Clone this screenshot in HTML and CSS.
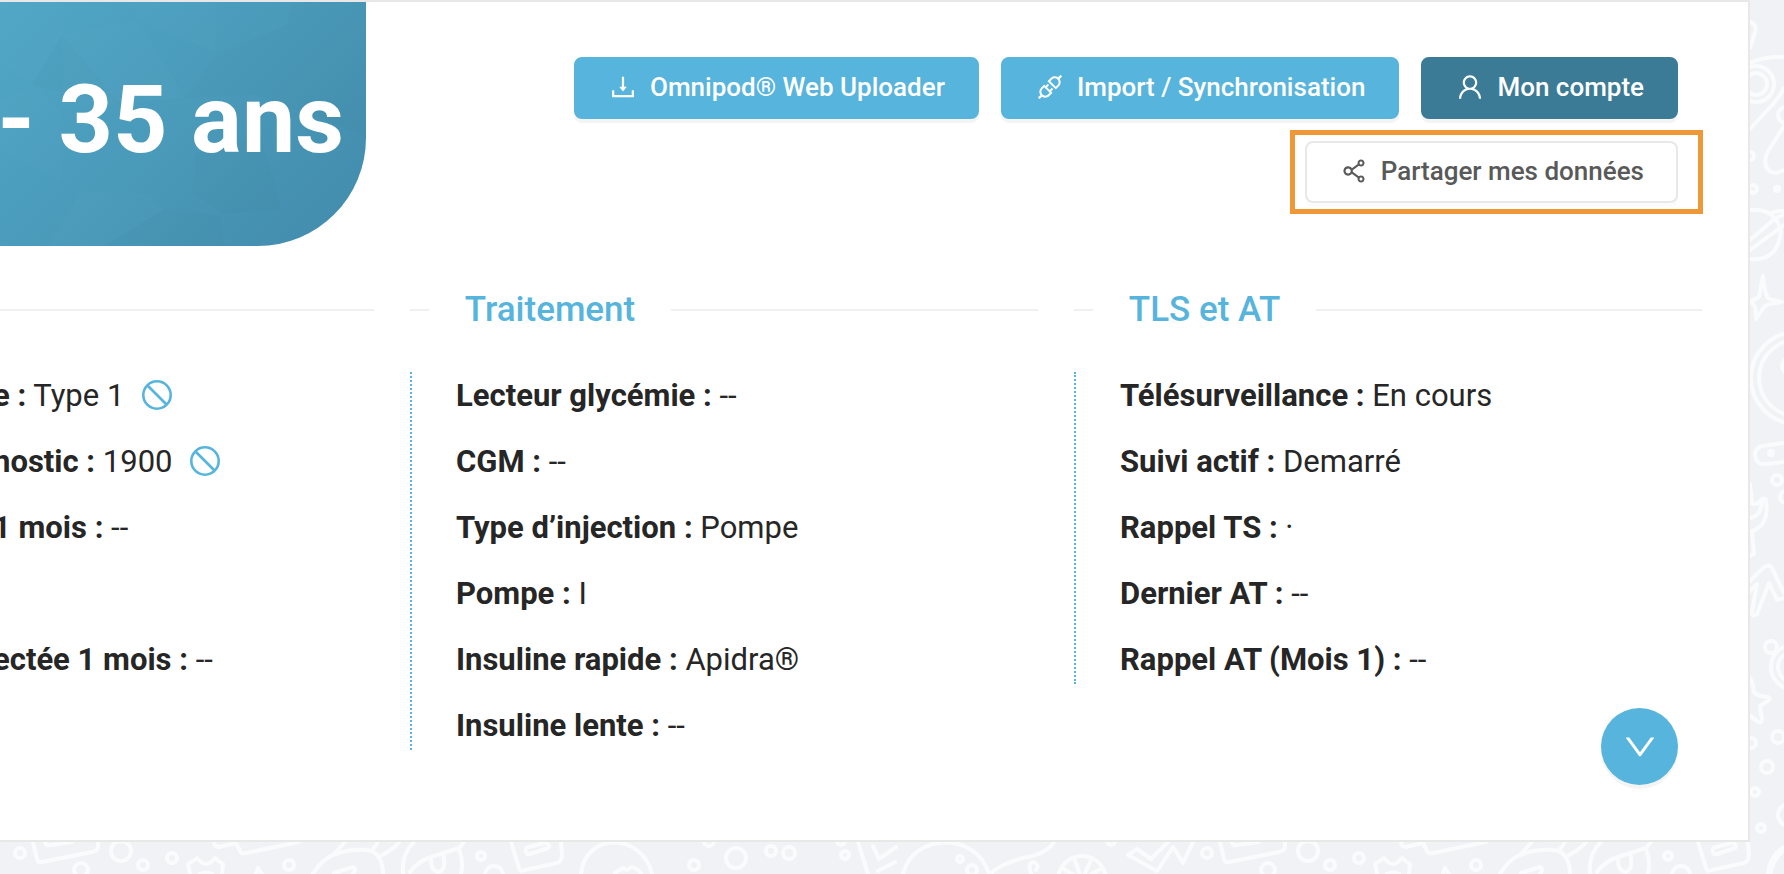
FILE: index.html
```html
<!DOCTYPE html>
<html lang="fr">
<head>
    <meta charset="UTF-8">
    <title>Dossier patient</title>
    <link rel="stylesheet" href="styles.css">
</head>
<body>
    <svg class="doodles" aria-hidden="true">
        <defs>
            <!-- bottom strip, repeats every 1187px -->
            <g id="doodle-row">
                <circle cx="20" cy="853" r="5"/>
                <path d="M33 842l4 17q1 4 5 3l50-10q6-1 6-6v-4M45 842q1 4 5 3l22-3"/>
                <circle cx="121" cy="851" r="10"/>
                <circle cx="81" cy="870" r="7"/>
                <circle cx="143" cy="865" r="5"/>
                <circle cx="172" cy="858" r="5"/>
                <path d="M214 842q0 5 5 5l17-4 4 8q1 3 6 2l53-11"/>
                <path d="M190 874l-2-10q5-3 9-6 5 6 9 6t9-6q4 4 8 6l-1 10M200 874q6-3 12 0"/>
                <path d="M256 874l2-6 4 6"/>
                <circle cx="289" cy="865" r="5"/>
                <path d="M313 874q8-14 20-19 20-8 39-4 11 6 11 23M333 855l12-13M372 851l6-9M382 855q12-6 17-13M334 873l19-6q4 2 0 7"/>
                <path d="M403 874q-2-20 11-32M410 872q8-11 21-15l28-9 5-6M459 849q5 12 2 25M431 857q-1 14 8 15 8-3 4-19"/>
                <circle cx="481" cy="856" r="4"/>
                <circle cx="494" cy="875" r="9"/>
                <path d="M511 842l8 26q1 4 6 2l32-7q5-2 5-8l-1-13M526 852q-2-4 3-5l16-4q6 1 3 5l-18 6q-3 1-4-2z"/>
                <path d="M581 874c4-42 61-42 71 0M615 873l8-5q4 4 8-1 7 1 10 7"/>
                <circle cx="709" cy="841" r="5"/>
                <circle cx="694" cy="865" r="5"/>
                <circle cx="736" cy="858" r="10"/>
                <circle cx="771" cy="851" r="5"/>
                <circle cx="789" cy="853" r="6"/>
                <circle cx="841" cy="841" r="4"/>
                <circle cx="845" cy="855" r="4"/>
                <path d="M858 842l10 32M873 846l6 13 17-12M878 871l17-9"/>
                <path d="M903 874c10-42 74-42 86 0M991 873q12-10 32-15 24-4 31-16M1031 874q-4-12 3-12 6 3 2 8"/>
                <circle cx="960" cy="859" r="3"/>
                <circle cx="972" cy="870" r="5"/>
                <circle cx="1082" cy="880" r="24"/>
                <path d="M1074 858l8 22 10-22M1062 868l20 12 20-12"/>
                <circle cx="1111" cy="841" r="4"/>
                <path d="M1168 842l-17 17-14-10-9 6 29 16 16-24 10 16 10-21"/>
            </g>
        </defs>
        <use href="#doodle-row"/>
        <use href="#doodle-row" x="1187"/>
        <!-- right strip -->
        <path d="M1750 22q7 2 5 10l-5 16M1750 63q16-7 34-6M1750 129l24-26q6-8 10-15M1784 126l-16 25q-6 12 1 20 6 4 15-1"/>
        <circle cx="1756" cy="84" r="11"/>
        <circle cx="1756" cy="84" r="18"/>
        <circle cx="1786" cy="115" r="8"/>
        <circle cx="1750" cy="156" r="4"/>
        <circle cx="1753" cy="189" r="4"/>
        <circle cx="1777" cy="189" r="2"/>
        <path d="M1750 210q26-2 31 22-4 30-31 27M1750 240l22-19q6-5 12-6M1750 250l34-25M1770 214q6-4 14-3"/>
        <path d="M1763 276q2 20 6 23l13 3q-16 2-18 5l-8 12q0-12-2-14l-4-4q8-2 9-5z"/>
        <circle cx="1797" cy="378" r="46"/>
        <circle cx="1797" cy="378" r="38"/>
        <circle cx="1790" cy="366" r="8"/>
        <path d="M1784 443l-21 3q-8 1-8 9 1 10 10 9l19-2"/>
        <circle cx="1771" cy="453" r="2"/>
        <circle cx="1777" cy="480" r="5"/>
        <circle cx="1786" cy="497" r="6"/>
        <path d="M1750 484l2 20q8 0 9-4 3-3 5 0 4 26-16 32M1750 518q11-2 12-16M1752 532l2 22-4 2"/>
        <path d="M1750 581l14-14q6-3 8 1l12 25M1784 598l-7 2-8-17-12 31q-5 4-5-2l5-28-7 7"/>
        <circle cx="1771" cy="647" r="6"/>
        <circle cx="1793" cy="667" r="22"/>
        <circle cx="1793" cy="667" r="15"/>
        <path d="M1750 678q3 5 4 14 2 4 14 5 4 2-2 5l-6 4 2 14q-1 4-5 1l-7-5"/>
        <circle cx="1778" cy="737" r="6"/>
        <circle cx="1751" cy="743" r="5"/>
        <circle cx="1767" cy="767" r="6"/>
        <circle cx="1755" cy="792" r="4"/>
        <circle cx="1761" cy="828" r="4"/>
        <circle cx="1789" cy="815" r="11"/>
        <circle cx="1808" cy="880" r="38"/>
    </svg>

    <main class="card">
        <header class="card-header">
            <div class="banner">
                <svg class="facets" viewBox="0 0 366 244" preserveAspectRatio="none" aria-hidden="true">
                    <path fill="#fff" fill-opacity=".015" d="M0 0h65l-3 33-30 49L0 60zM137 0h80l-2 50-78-32zM62 33l75-15 48 78-122 10zM0 100l32-18 30 28-2 68-60-30z"/>
                    <path fill="#000" fill-opacity=".012" d="M293 0h73v55l-80-32zM286 23l80 32v80l-110-43zM185 96l32-44 69-29-30 70zM195 152l65-20 22 75-60 5-30-22zM165 207l55 6 5 31H105zM62 33l60 70-90-20z"/>
                    <path fill="#fff" fill-opacity=".012" d="M80 190l70 2 14 16-60 36H48z"/>
                </svg>
                <h1>- 35 ans</h1>
            </div>
            <div class="actions">
                <button type="button" class="btn btn-primary">
                    <svg class="icon" viewBox="0 0 1024 1024" aria-hidden="true"><path d="M505.7 661a8 8 0 0012.6 0l112-141.7c4.1-5.2.4-12.9-6.3-12.9h-74.1V168c0-4.4-3.6-8-8-8h-60c-4.4 0-8 3.6-8 8v338.3H400c-6.7 0-10.4 7.7-6.3 12.9l112 141.8zM878 626h-60c-4.4 0-8 3.6-8 8v154H214V634c0-4.4-3.6-8-8-8h-60c-4.4 0-8 3.6-8 8v198c0 17.7 14.3 32 32 32h684c17.7 0 32-14.3 32-32V634c0-4.4-3.6-8-8-8z"/></svg>
                    Omnipod® Web Uploader
                </button>
                <button type="button" class="btn btn-primary">
                    <svg class="icon" viewBox="0 0 1024 1024" aria-hidden="true"><path d="M917.7 148.8l-42.4-42.4c-1.6-1.6-3.6-2.3-5.7-2.3s-4.1.8-5.7 2.3l-76.1 76.1a199.27 199.27 0 00-112.1-34.3c-51.2 0-102.4 19.5-141.5 58.6L432.3 308.7a8.03 8.03 0 000 11.3L704 591.7c1.6 1.6 3.6 2.3 5.7 2.3 2 0 4.1-.8 5.7-2.3l101.9-101.9c68.9-69 77-175.7 24.3-253.5l76.1-76.1c3.1-3.2 3.1-8.3 0-11.4zM769.1 441.7l-59.4 59.4-186.8-186.8 59.4-59.4c24.9-24.9 58.1-38.7 93.4-38.7 35.3 0 68.4 13.7 93.4 38.7 24.9 24.9 38.7 58.1 38.7 93.4 0 35.3-13.8 68.4-38.7 93.4zm-190.2 105a8.03 8.03 0 00-11.3 0L501 613.3 410.7 523l66.7-66.7c3.1-3.1 3.1-8.2 0-11.3L441 408.6a8.03 8.03 0 00-11.3 0L363 475.3l-43-43a7.85 7.85 0 00-5.7-2.3c-2 0-4.1.8-5.7 2.3L206.8 534.2c-68.9 69-77 175.7-24.3 253.5l-76.1 76.1a8.03 8.03 0 000 11.3l42.4 42.4c1.6 1.6 3.6 2.3 5.7 2.3s4.1-.8 5.7-2.3l76.1-76.1c33.7 22.9 72.9 34.3 112.1 34.3 51.2 0 102.4-19.5 141.5-58.6l101.9-101.9c3.1-3.1 3.1-8.2 0-11.3l-43-43 66.7-66.7c3.1-3.1 3.1-8.2 0-11.3l-36.6-36.2zM441.7 769.1a131.32 131.32 0 01-93.2 38.7c-35.3 0-68.4-13.7-93.4-38.7a131.32 131.32 0 01-38.7-93.4c0-35.3 13.7-68.4 38.7-93.4l59.4-59.4 186.8 186.8-59.6 59.4z"/></svg>
                    Import / Synchronisation
                </button>
                <button type="button" class="btn btn-dark">
                    <svg class="icon" viewBox="0 0 1024 1024" aria-hidden="true"><path d="M858.5 763.6a374 374 0 00-80.6-119.5 375.63 375.63 0 00-119.5-80.6c-.4-.2-.8-.3-1.2-.5C719.5 518 760 444.7 760 362c0-137-111-248-248-248S264 225 264 362c0 82.7 40.5 156 102.8 201.1-.4.2-.8.3-1.2.5-44.8 18.9-85 46-119.5 80.6a375.63 375.63 0 00-80.6 119.5A371.7 371.7 0 00136 901.8a8 8 0 008 8.2h60c4.4 0 7.9-3.5 8-7.8 2-77.2 33-149.5 87.8-204.3 56.7-56.7 132-87.9 212.2-87.9s155.5 31.2 212.2 87.9C779 752.7 810 825 812 902.2c.1 4.4 3.6 7.8 8 7.8h60a8 8 0 008-8.2c-1-47.8-10.9-94.3-29.5-138.2zM512 534c-45.9 0-89.1-17.9-121.6-50.4S340 407.9 340 362c0-45.9 17.9-89.1 50.4-121.6S466.1 190 512 190s89.1 17.9 121.6 50.4S684 316.1 684 362c0 45.9-17.9 89.1-50.4 121.6S557.9 534 512 534z"/></svg>
                    Mon compte
                </button>
                <div class="highlight">
                    <button type="button" class="btn btn-default">
                        <svg class="icon" viewBox="0 0 1024 1024" aria-hidden="true"><path d="M752 664c-28.5 0-54.8 10-75.4 26.7L469.4 540.8a160.68 160.68 0 000-57.6l207.2-149.9C697.2 350 723.5 360 752 360c66.2 0 120-53.8 120-120s-53.8-120-120-120-120 53.8-120 120c0 11.6 1.6 22.7 4.7 33.3L439.9 415.8C410.7 377.1 364.3 352 312 352c-88.4 0-160 71.6-160 160s71.6 160 160 160c52.3 0 98.7-25.1 127.9-63.8l196.8 142.5c-3.1 10.6-4.7 21.8-4.7 33.3 0 66.2 53.8 120 120 120s120-53.8 120-120-53.8-120-120-120zm0-476c28.7 0 52 23.3 52 52s-23.3 52-52 52-52-23.3-52-52 23.3-52 52-52zM312 600c-48.5 0-88-39.5-88-88s39.5-88 88-88 88 39.5 88 88-39.5 88-88 88zm440 236c-28.7 0-52-23.3-52-52s23.3-52 52-52 52 23.3 52 52-23.3 52-52 52z"/></svg>
                        Partager mes données
                    </button>
                </div>
            </div>
        </header>

        <div class="columns">
            <section class="column column-first">
                <div class="divider"></div>
                <ul class="infos">
                    <li><b>e :</b> Type 1 <svg class="stop" viewBox="0 0 30 30" aria-hidden="true"><circle cx="15" cy="15" r="13.7"/><path d="M5.5 5.5l19 19"/></svg></li>
                    <li><b>nostic :</b> 1900 <svg class="stop" viewBox="0 0 30 30" aria-hidden="true"><circle cx="15" cy="15" r="13.7"/><path d="M5.5 5.5l19 19"/></svg></li>
                    <li><b>1 mois :</b> --</li>
                    <li></li>
                    <li><b>ectée 1 mois :</b> --</li>
                </ul>
            </section>
            <section class="column">
                <h2 class="divider">Traitement</h2>
                <ul class="infos">
                    <li><b>Lecteur glycémie :</b> --</li>
                    <li><b>CGM :</b> --</li>
                    <li><b>Type d’injection :</b> Pompe</li>
                    <li><b>Pompe :</b> I</li>
                    <li><b>Insuline rapide :</b> Apidra®</li>
                    <li><b>Insuline lente :</b> --</li>
                </ul>
            </section>
            <section class="column">
                <h2 class="divider">TLS et AT</h2>
                <ul class="infos">
                    <li><b>Télésurveillance :</b> En cours</li>
                    <li><b>Suivi actif :</b> Demarré</li>
                    <li><b>Rappel TS :</b> ·</li>
                    <li><b>Dernier AT :</b> --</li>
                    <li><b>Rappel AT (Mois 1) :</b> --</li>
                </ul>
            </section>
        </div>

        <button type="button" class="btn-round" aria-label="Afficher plus">
            <svg viewBox="0 0 1024 1024" aria-hidden="true"><path d="M884 256h-75c-5.1 0-9.9 2.5-12.9 6.6L512 654.2 227.9 262.6c-3-4.1-7.8-6.6-12.9-6.6h-75c-6.5 0-10.3 7.4-6.5 12.7l352.6 486.1c12.8 17.6 39 17.6 51.7 0l352.6-486.1c3.9-5.3.1-12.7-6.4-12.7z"/></svg>
        </button>
    </main>
</body>
</html>
```
FILE: styles.css
```css
* {
    box-sizing: border-box;
}
body {
    margin: 0;
    font-family: Roboto, sans-serif;
    font-size: 31px;
    color: #262626;
    background-color: #f0f2f6;
}
.doodles {
    position: fixed;
    top: 0;
    left: 0;
    width: 100%;
    height: 100%;
    fill: none;
    stroke: #fafbfc;
    stroke-width: 4;
    stroke-linecap: round;
    stroke-linejoin: round;
}
.card {
    position: relative;
    margin-right: 34px;
    padding-bottom: 90px;
    background: #fff;
    border: 2px solid #e8e8e8;
    border-left: 0;
    overflow: hidden;
}

/* header */
.card-header {
    display: flex;
    justify-content: space-between;
    align-items: flex-start;
    padding-right: 70px;
}
.banner {
    display: grid;
    grid-template-columns: 100%;
    width: 366px;
    height: 244px;
    flex-shrink: 0;
    border-bottom-right-radius: 108px;
    background: linear-gradient(135deg, #50a6c6 0%, #4a9aba 50%, #428aab 100%);
    overflow: hidden;
}
.banner h1, .facets {
    grid-area: 1 / 1;
}
.facets {
    width: 100%;
    height: 100%;
}
.banner h1 {
    margin: 0;
    padding: 0 22px 8px 0;
    align-self: center;
    justify-self: end;
    white-space: nowrap;
    font-size: 95px;
    line-height: 120px;
    font-weight: 700;
    color: #fff;
}
.actions {
    display: flex;
    flex-wrap: wrap;
    justify-content: flex-end;
    gap: 22px;
    padding-top: 55px;
}

/* buttons */
.btn {
    display: flex;
    align-items: center;
    gap: 12px;
    height: 62px;
    padding: 0 32px 2px;
    border: 2px solid transparent;
    border-radius: 8px;
    font-family: inherit;
    font-size: 26px;
    font-weight: 500;
    white-space: nowrap;
    cursor: pointer;
    box-shadow: 0 4px 0 rgba(0, 0, 0, 0.045);
}
.btn-primary {
    color: #fff;
    background: #57b4dc;
    border-color: #57b4dc;
}
.btn-dark {
    color: #fff;
    background: #3b7b95;
    border-color: #3b7b95;
}
.btn-default {
    color: #595959;
    background: #fff;
    border-color: #e8e8e8;
    box-shadow: 0 4px 0 rgba(0, 0, 0, 0.015);
}
.icon {
    width: 30px;
    height: 30px;
    fill: currentColor;
}
.highlight {
    position: relative;
}
.highlight::after {
    content: "";
    position: absolute;
    top: -11px;
    right: -25px;
    bottom: -11px;
    left: -15px;
    border: 5px solid #f09837;
    pointer-events: none;
}

/* columns */
.columns {
    display: grid;
    grid-template-columns: 374px 1fr 1fr;
    align-items: start;
    gap: 36px;
    padding: 36px 46px 0 0;
}
.divider {
    display: flex;
    align-items: center;
    gap: 36px;
    height: 56px;
    margin: 0 0 34px;
    font-size: 35px;
    font-weight: 500;
    line-height: 56px;
    white-space: nowrap;
    color: #57b4dc;
}
.divider::before, .divider::after {
    content: "";
    height: 2px;
    background: #f0f0f0;
}
.divider::before {
    width: 3%;
}
.divider::after {
    flex: 1;
}
.infos {
    display: flex;
    flex-direction: column;
    gap: 18px;
    margin: 0;
    padding: 0 0 0 44px;
    list-style: none;
    border-left: 2px dotted #57b4dc;
    line-height: 48px;
    white-space: nowrap;
}
.infos li {
    height: 48px;
}
.column-first .divider::before {
    display: none;
}
.column-first .infos {
    margin-left: -7px;
    padding-left: 0;
    border-left: 0;
}
.stop {
    width: 30px;
    height: 30px;
    margin-left: 10px;
    vertical-align: -4px;
    fill: none;
    stroke: #57b4dc;
    stroke-width: 2.6;
}
.btn-round {
    position: absolute;
    right: 70px;
    bottom: 55px;
    display: flex;
    align-items: center;
    justify-content: center;
    width: 77px;
    height: 77px;
    padding: 0;
    border: 0;
    border-radius: 50%;
    background: #57b4dc;
    box-shadow: 0 4px 0 rgba(0, 0, 0, 0.045);
    cursor: pointer;
}
.btn-round svg {
    width: 38px;
    height: 38px;
    fill: #fff;
}
```
